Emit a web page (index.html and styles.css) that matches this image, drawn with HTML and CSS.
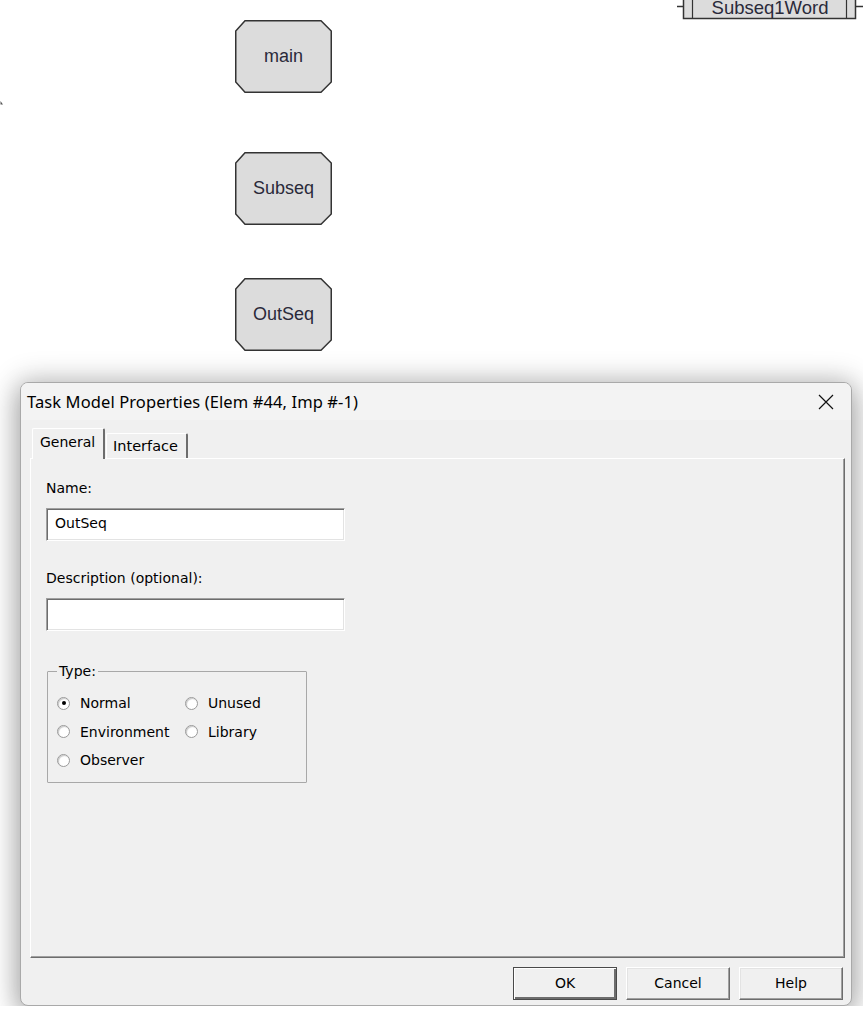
FILE: index.html
```html
<!DOCTYPE html>
<html lang="en">
<head>
  <meta charset="UTF-8">
  <title>Task Model Properties</title>
  <link rel="stylesheet" href="styles.css">
</head>
<body>
  <div class="canvas">
    <svg class="mark" width="6" height="6" viewBox="0 0 6 6"><path d="M0.5 1 L3 4.5 L0.5 4.5 Z" fill="#555"/></svg>

    <div class="word">
      <svg width="186" height="33" viewBox="0 0 186 33">
        <rect x="6.5" y="0.5" width="172" height="31" fill="#dcdcdc" stroke="#333" stroke-width="1.5"/>
        <line x1="15.5" y1="0" x2="15.5" y2="32" stroke="#333" stroke-width="1.2"/>
        <line x1="169.5" y1="0" x2="169.5" y2="32" stroke="#333" stroke-width="1.2"/>
        <line x1="0" y1="19.5" x2="6" y2="19.5" stroke="#333" stroke-width="1.5"/>
        <line x1="179" y1="19.5" x2="186" y2="19.5" stroke="#333" stroke-width="1.5"/>
      </svg>
      <span>Subseq1Word</span>
    </div>

    <div class="node n-main">
      <svg width="97" height="73" viewBox="0 0 97 73"><polygon points="10,0.75 86,0.75 96.25,11 96.25,62 86,72.25 10,72.25 0.75,62 0.75,11" fill="#dcdcdc" stroke="#333" stroke-width="1.5"/></svg>
      <span>main</span>
    </div>
    <div class="node n-subseq">
      <svg width="97" height="73" viewBox="0 0 97 73"><polygon points="10,0.75 86,0.75 96.25,11 96.25,62 86,72.25 10,72.25 0.75,62 0.75,11" fill="#dcdcdc" stroke="#333" stroke-width="1.5"/></svg>
      <span>Subseq</span>
    </div>
    <div class="node n-outseq">
      <svg width="97" height="73" viewBox="0 0 97 73"><polygon points="10,0.75 86,0.75 96.25,11 96.25,62 86,72.25 10,72.25 0.75,62 0.75,11" fill="#dcdcdc" stroke="#333" stroke-width="1.5"/></svg>
      <span>OutSeq</span>
    </div>
  </div>

  <div class="dialog">
    <div class="titlebar">
      <span class="title">Task Model Properties (Elem #44, Imp #-1)</span>
      <svg class="close" width="16" height="16" viewBox="0 0 16 16"><path d="M1 1 L15 15 M15 1 L1 15" stroke="#111" stroke-width="1.2"/></svg>
    </div>

    <div class="dlg-body">
      <div class="tabs">
        <div class="tab active">General</div>
        <div class="tab">Interface</div>
      </div>
      <div class="panel">
        <div class="field-label">Name:</div>
        <div class="text-input">OutSeq</div>
        <div class="field-label desc">Description (optional):</div>
        <div class="text-input"></div>

        <fieldset class="group">
          <legend>Type:</legend>
          <div class="radios">
            <label class="radio-item"><span class="radio checked"></span>Normal</label>
            <label class="radio-item"><span class="radio"></span>Unused</label>
            <label class="radio-item"><span class="radio"></span>Environment</label>
            <label class="radio-item"><span class="radio"></span>Library</label>
            <label class="radio-item"><span class="radio"></span>Observer</label>
          </div>
        </fieldset>
      </div>
    </div>

    <div class="footer">
      <div class="btn default">OK</div>
      <div class="btn">Cancel</div>
      <div class="btn">Help</div>
    </div>
  </div>
</body>
</html>
```

FILE: styles.css
```css
body {
  margin: 0;
  background: #fff;
  font-family: "DejaVu Sans", sans-serif;
  overflow: hidden;
}

/* diagram */
.canvas {
  position: relative;
  height: 382px;
}
.mark {
  position: absolute;
  left: 0;
  top: 100px;
}
.node {
  position: absolute;
  left: 235px;
  width: 97px;
  height: 73px;
  display: flex;
  align-items: center;
  justify-content: center;
}
.node svg {
  position: absolute;
  left: 0;
  top: 0;
}
.node span,
.word span {
  position: relative;
  font-family: "Liberation Sans", Arial, sans-serif;
  font-size: 18px;
  color: #2a2a3a;
}
.n-main { top: 20px; }
.n-subseq { top: 152px; }
.n-outseq { top: 278px; }

.word {
  position: absolute;
  left: 677px;
  top: -13px;
  width: 186px;
  height: 33px;
  display: flex;
  align-items: center;
  justify-content: center;
}
.word svg {
  position: absolute;
  left: 0;
  top: 0;
}
.word span {
  font-size: 18.5px;
  top: 4px;
}

/* dialog */
.dialog {
  margin-left: 20px;
  width: 832px;
  height: 624px;
  box-sizing: border-box;
  border: 1px solid #a9a9a9;
  border-radius: 8px;
  background: #f0f0f0;
  box-shadow: 0 0 28px 4px rgba(0, 0, 0, 0.2), 0 10px 26px 2px rgba(0, 0, 0, 0.22);
  display: flex;
  flex-direction: column;
  overflow: hidden;
}
.titlebar {
  height: 37px;
  flex: none;
  background: #f3f3f3;
  display: flex;
  align-items: center;
  justify-content: space-between;
  padding: 0 17px 0 6px;
}
.title {
  font-family: "Noto Sans", sans-serif;
  font-size: 16.5px;
  letter-spacing: 0.1px;
  color: #000;
}
.dlg-body {
  flex: 1;
  padding: 8px 6px 0 9px;
  display: flex;
  flex-direction: column;
  font-size: 14px;
  color: #000;
}
.tabs {
  display: flex;
  align-items: flex-end;
  height: 30px;
  padding-left: 2px;
}
.tab {
  box-sizing: border-box;
  height: 25px;
  padding: 0 6px;
  border-top: 1px solid #fff;
  border-left: 1px solid #fff;
  border-right: 2px solid #6d6d6d;
  border-radius: 2px 2px 0 0;
  line-height: 24px;
  background: #f0f0f0;
}
.tab.active {
  height: 31px;
  width: 73px;
  padding: 0 0 0 7px;
  margin-bottom: -1px;
  line-height: 26px;
  position: relative;
  z-index: 1;
}
.tab + .tab {
  margin-left: 1px;
  width: 82px;
  font-size: 14.5px;
}
.panel {
  box-sizing: border-box;
  height: 500px;
  border-top: 1px solid #fff;
  border-left: 1px solid #fff;
  border-right: 1px solid #6d6d6d;
  border-bottom: 1px solid #6d6d6d;
  box-shadow: inset -1px -1px 0 #a0a0a0;
  padding: 21px 15px;
}
.field-label {
  line-height: 16px;
}
.field-label.desc {
  margin-top: 29px;
}
.text-input {
  box-sizing: border-box;
  width: 299px;
  height: 33px;
  margin-top: 12px;
  background: #fff;
  border: 1px solid;
  border-color: #a0a0a0 #fff #fff #a0a0a0;
  box-shadow: inset 1px 1px 0 #6d6d6d, inset -1px -1px 0 #e3e3e3;
  padding: 0 8px;
  line-height: 29px;
}
.group {
  box-sizing: border-box;
  width: 260px;
  height: 120px;
  margin: 32px 0 0 1px;
  padding: 0 9px;
  border: 1px solid #a8a8a8;
  border-radius: 1px;
}
.group legend {
  padding: 0 2px;
  line-height: 16px;
}
.radios {
  display: grid;
  grid-template-columns: 128px auto;
  grid-auto-rows: 28.5px;
  margin-top: 10px;
}
.radio-item {
  display: flex;
  align-items: center;
  gap: 10px;
}
.radio {
  box-sizing: border-box;
  width: 13px;
  height: 13px;
  border-radius: 50%;
  border: 1px solid #9a9a9a;
  background: #fff;
  box-shadow: inset 1px 1px 1px #c8c8c8;
  display: flex;
  align-items: center;
  justify-content: center;
}
.radio.checked::after {
  content: "";
  width: 4px;
  height: 4px;
  border-radius: 50%;
  background: #000;
}
.footer {
  flex: none;
  height: 47px;
  box-sizing: border-box;
  padding: 9px 8px 0 0;
  display: flex;
  justify-content: flex-end;
  gap: 9px;
}
.btn {
  box-sizing: border-box;
  width: 104px;
  height: 33px;
  border: 1px solid;
  border-color: #fff #6d6d6d #6d6d6d #fff;
  box-shadow: inset -1px -1px 0 #a0a0a0, inset 1px 1px 0 #e3e3e3;
  text-align: center;
  line-height: 30px;
  font-size: 14px;
}
.btn.default {
  border: 1px solid #4a4a4a;
  box-shadow: inset 1px 1px 0 #fff, inset -2px -2px 0 #6d6d6d;
}
```
